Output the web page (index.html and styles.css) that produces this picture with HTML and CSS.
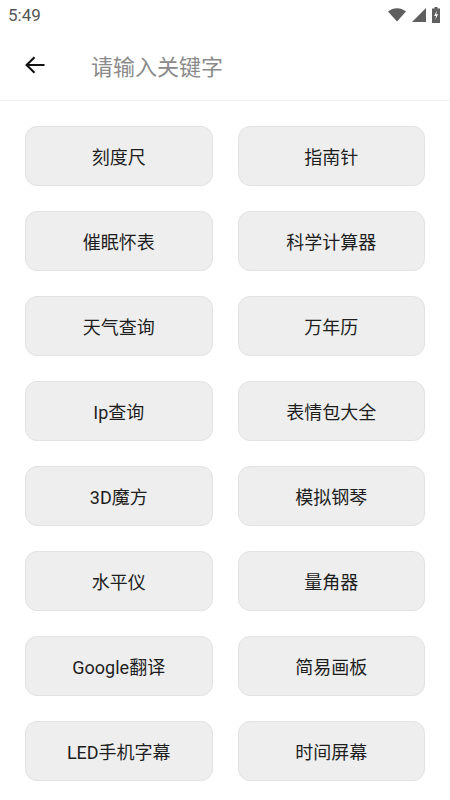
FILE: index.html
```html
<html>
<head>
<meta charset="UTF-8">
<link rel="stylesheet" href="styles.css">
</head>
<body>
<div class="statusbar">
  <span class="time">5:49</span>
  <span class="sysicons">
    <svg width="18" height="14" viewBox="0 0 18 14"><path d="M0 3.5 C5 -1 13 -1 18 3.5 L9 13.5 Z" fill="#5f5f5f"/></svg>
    <svg width="14" height="14" viewBox="0 0 14 14"><path d="M14 0 L14 14 L0 14 Z" fill="#5f5f5f"/></svg>
    <svg width="8" height="16" viewBox="0 0 8 16"><path d="M2.5 0 H5.5 V1.5 H8 V16 H0 V1.5 H2.5 Z" fill="#5f5f5f"/><path d="M4.8 3.5 L2.2 9 H4 L3.4 12.8 L6 7.3 H4.2 Z" fill="#fff"/></svg>
  </span>
</div>
<div class="toolbar">
  <svg class="back" width="20" height="18" viewBox="0 0 20 18"><path d="M19.5 9 H2 M9.5 1.2 L1.6 9 L9.5 16.8" stroke="#111" stroke-width="2.1" fill="none"/></svg>
  <span class="search">请输入关键字</span>
</div>
<div class="grid">
  <div class="tool">刻度尺</div>
  <div class="tool">指南针</div>
  <div class="tool">催眠怀表</div>
  <div class="tool">科学计算器</div>
  <div class="tool">天气查询</div>
  <div class="tool">万年历</div>
  <div class="tool">Ip查询</div>
  <div class="tool">表情包大全</div>
  <div class="tool">3D魔方</div>
  <div class="tool">模拟钢琴</div>
  <div class="tool">水平仪</div>
  <div class="tool">量角器</div>
  <div class="tool">Google翻译</div>
  <div class="tool">简易画板</div>
  <div class="tool">LED手机字幕</div>
  <div class="tool">时间屏幕</div>
</div>
</body>
</html>
```
FILE: styles.css
```css
body {
  margin: 0;
  background: white;
  font-family: Roboto, "Noto Sans CJK SC", sans-serif;
  color: #222;
}
.statusbar {
  height: 30px;
  display: flex;
  align-items: center;
  justify-content: space-between;
  padding: 0 10px 0 8px;
}
.time {
  font-size: 17px;
  color: #555;
}
.sysicons {
  display: flex;
  align-items: center;
  gap: 6px;
}
.toolbar {
  height: 70px;
  display: flex;
  align-items: center;
  border-bottom: 1px solid #eeeeee;
}
.back {
  margin-left: 25px;
}
.search {
  margin-left: 46px;
  font-size: 22px;
  color: #8a8a8a;
}
.grid {
  display: grid;
  grid-template-columns: 1fr 1fr;
  gap: 25px;
  padding: 25px 25px;
}
.tool {
  height: 58px;
  border: 1px solid #e2e2e2;
  border-radius: 12px;
  background: #eeeeee;
  display: flex;
  align-items: center;
  justify-content: center;
  font-size: 18px;
  color: #1e1e1e;
}
```
